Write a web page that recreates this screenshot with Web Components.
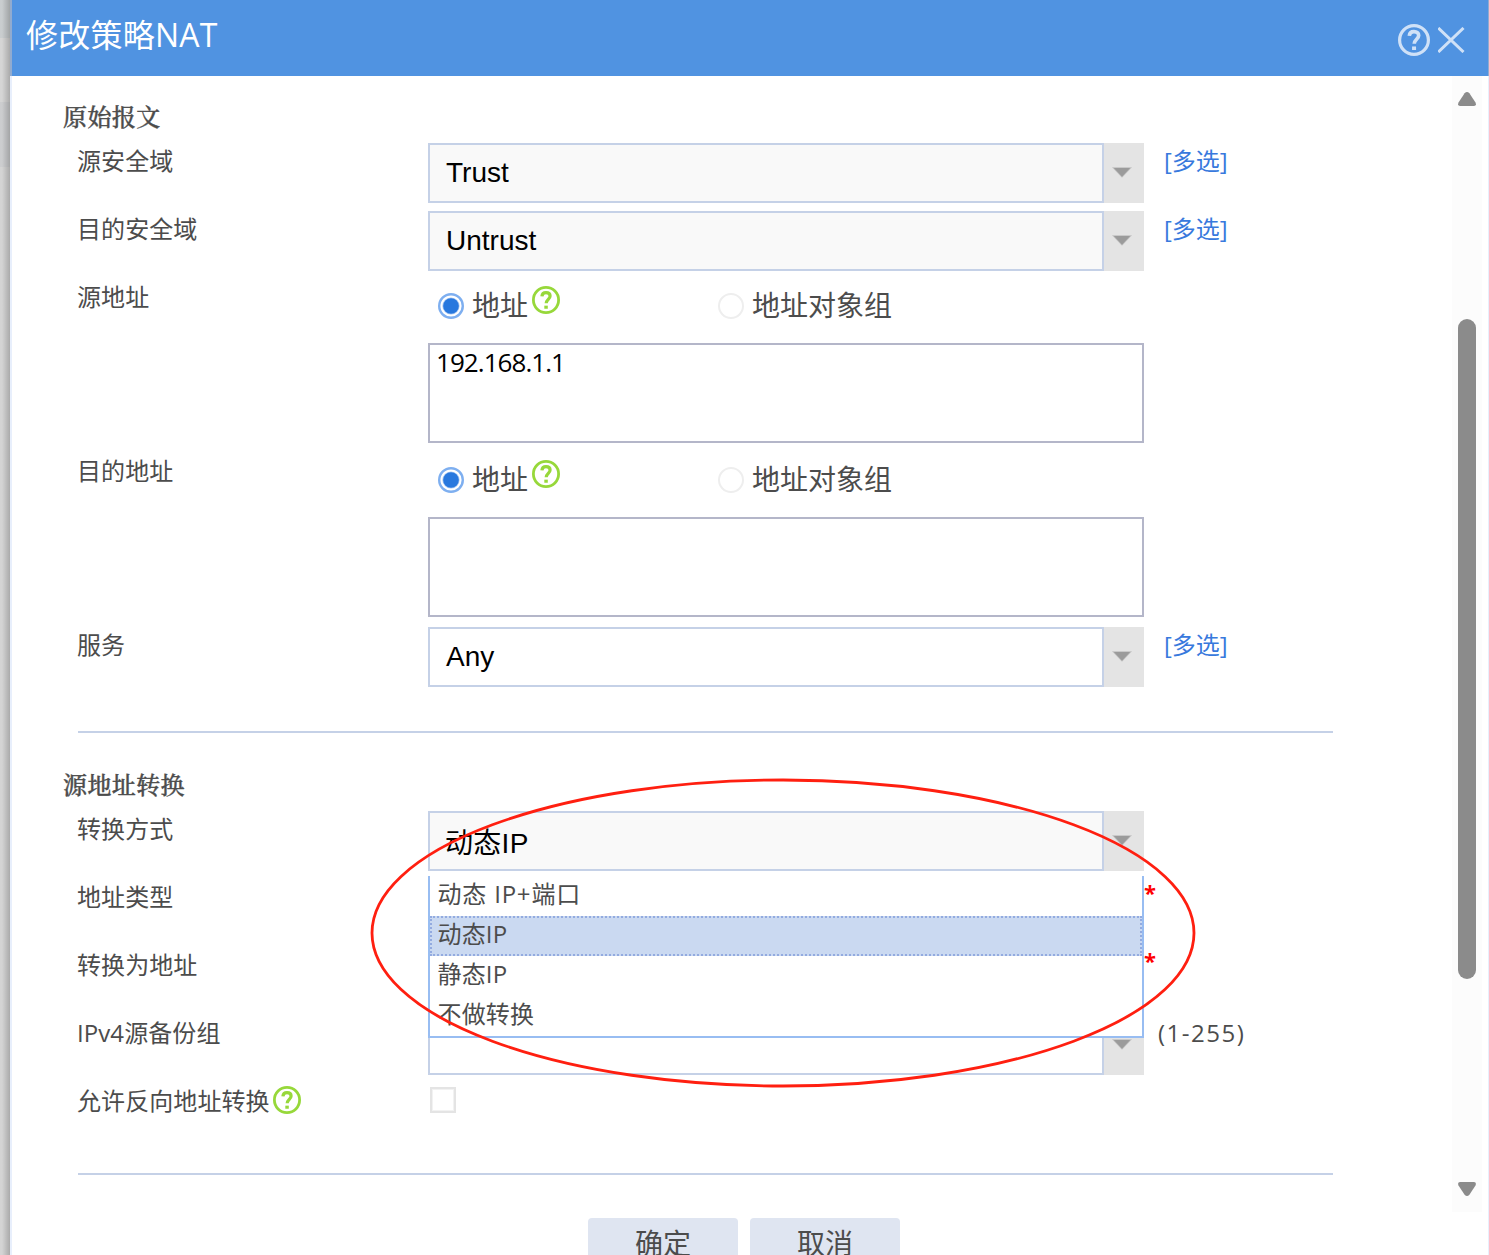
<!DOCTYPE html>
<html lang="zh-CN">
<head>
<meta charset="utf-8">
<title>修改策略NAT</title>
<style>
html,body{margin:0;height:1255px;overflow:hidden;background:#fff}
body{font-family:"Open Sans","Noto Sans CJK SC",sans-serif;color:#4c4c4c;font-size:24px}
</style>
</head>
<body>
<nat-dialog></nat-dialog>
<script>
const define=(name,html,setup)=>customElements.define(name,class extends HTMLElement{
  constructor(){
    super();
    const t=document.createElement('template');
    t.innerHTML=html;
    this.attachShadow({mode:'open'}).appendChild(t.content.cloneNode(true));
  }
  connectedCallback(){ if(setup) setup(this,this.shadowRoot); }
});

define('help-icon',`<style>:host{display:block;width:28px;height:28px;flex:none;color:#97d83a}svg{display:block;width:100%;height:100%}</style>
<svg viewBox="0 0 28 28" fill="none" stroke="currentColor"><circle cx="14" cy="14" r="12.6" stroke-width="2.8"/><path d="M9.9 10.4C10.1 7.9 11.6 6.7 14 6.7c2.5 0 4.1 1.4 4.1 3.4 0 3.1-3.9 3.5-3.9 7.2" stroke-width="3.2"/><path d="M12.3 21.2h3.5" stroke-width="3.1"/></svg>`);

define('title-bar',`<style>
:host{display:flex;height:76px;box-sizing:border-box;background:#5093e1;color:#fff;justify-content:space-between;padding:0 23px 0 14px}
h1{margin:0;font-size:32px;line-height:69px;font-weight:400;white-space:nowrap;letter-spacing:.25px}
.tools{display:flex;gap:8px;padding-top:24px;color:#cfe1f7}
help-icon{width:32px;height:32px;color:inherit}
svg{display:block;margin-top:3px}
</style><h1><slot></slot></h1><div class="tools"><help-icon></help-icon>
<svg width="27" height="26" viewBox="0 0 27 26" fill="none" stroke="currentColor" stroke-width="3"><path d="M.3 1L25.5 25M25.5 1L.3 25"/></svg></div>`);

define('section-title',`<style>:host{display:block;font:500 24px/28px "Noto Serif CJK SC","Noto Serif SC","Noto Sans CJK SC",serif;letter-spacing:.4px;height:32px;margin-left:51px;white-space:nowrap;-webkit-text-stroke:.4px #4c4c4c}</style><slot></slot>`);

define('form-row',`<style>
:host{display:grid;grid-template-columns:351px 716px 1fr;height:68px;margin-left:65px}
:host([tall]){height:174px}
.label{display:flex;height:38px;line-height:36px;white-space:nowrap;gap:3.4px;letter-spacing:.08px}
.aside{line-height:36px;height:38px;white-space:nowrap}
.label help-icon{margin-top:3px}
</style><div class="label"><slot name="label"></slot></div><div><slot></slot></div><div class="aside"><slot name="aside"></slot></div>`,
(h,r)=>{ if(h.hasAttribute('help')) r.querySelector('.label').appendChild(document.createElement('help-icon')); });

define('select-box',`<style>
:host{display:flex;position:relative;height:60px;width:716px}
.value{flex:1;box-sizing:border-box;border:2px solid #c5d1e7;background:#fff;color:#000;font:28px/56px "Liberation Sans","Noto Sans CJK SC",sans-serif;padding-left:16px;white-space:nowrap}
:host([shaded]) .value{background:#f9f9f9}
:host([cjk]) .value{line-height:61px;padding-left:15px;height:60px;letter-spacing:.3px}
.arrow{width:40px;background:#e4e4e4;display:flex;justify-content:center;padding-top:24px;box-sizing:border-box}
svg{display:block;margin-right:4px}
</style><div class="value"><slot></slot></div><div class="arrow"><svg width="20" height="11" viewBox="0 0 20 11"><path d="M0 .3h20L10 10.8z" fill="#c0c0c0"/><path d="M1.8 1h16.4L10 9.8z" fill="#9b9b9b"/></svg></div><slot name="menu"></slot>`);

define('option-list',`<style>
:host{position:absolute;left:0;top:65px;z-index:2;width:716px;height:162px;box-sizing:border-box;border:2px solid #98bdf2;border-top:0;background:#fff;letter-spacing:0}
</style><slot></slot>`);

define('option-item',`<style>
:host{display:block;height:40px;box-sizing:border-box;border:2px solid transparent;padding-left:5.5px;line-height:32px;font-size:24px;color:#4c4c4c;white-space:nowrap;letter-spacing:.15px}
:host([spaced]){letter-spacing:.8px}
:host([selected]){background:#cad9f1;border:2px dotted #93abe0}
</style><slot></slot>`);

define('radio-choice',`<style>
:host{display:flex;align-items:flex-start;width:280px;height:54px;font-size:28px;line-height:52px;white-space:nowrap}
svg{flex:none;margin:14px 8px 0 0}
help-icon{margin:7px 0 0 4px}
.on{display:none}:host([checked]) .on{display:block}:host([checked]) .off{display:none}
</style><svg class="on" width="26" height="26" viewBox="0 0 26 26"><circle cx="13" cy="13" r="11.8" fill="#fff" stroke="#7eaff0" stroke-width="2.4"/><circle cx="13" cy="13" r="8.6" fill="#a9c8f2"/><circle cx="13" cy="13" r="7.8" fill="#2878de"/></svg>
<svg class="off" width="26" height="26" viewBox="0 0 26 26"><circle cx="13" cy="13" r="12" fill="#fff" stroke="#eee" stroke-width="2"/></svg><slot></slot>`,
(h,r)=>{ if(h.hasAttribute('help')) r.appendChild(document.createElement('help-icon')); });

define('address-field',`<style>
:host{display:block}
.choices{display:flex;height:64px;padding-left:10px;box-sizing:border-box}
.box{height:100px;box-sizing:border-box;border:2px solid #b4b6c9;background:#fff;color:#000;font-size:26px;line-height:35px;padding-left:6px;letter-spacing:-.95px}
</style><div class="choices"><radio-choice checked help>地址</radio-choice><radio-choice>地址对象组</radio-choice></div><div class="box"><slot></slot></div>`);

define('multi-link',`<style>:host{display:block;color:#3879dd;padding-left:20px}</style><slot></slot>`);
define('required-mark',`<style>:host{display:block;color:#f00;font-weight:700;font-size:22px;line-height:27px}</style>*`);
define('range-hint',`<style>:host{display:block;padding-left:14px;letter-spacing:1.5px}</style><slot></slot>`);
define('check-box',`<style>:host{display:block;width:26px;height:26px;box-sizing:border-box;border:2px solid #e4e4e4;box-shadow:inset 0 0 0 1px #f2f2f2;margin:4px 0 0 2px}</style>`);
define('rule-line',`<style>:host{display:block;height:2px;width:1255px;margin-left:66px;background:#c5d1e7}</style>`);

define('scroll-rail',`<style>
:host{display:flex;flex-direction:column;align-items:center;width:30px;height:1136px;background:#fcfcfc;margin-right:6px;flex:none;box-sizing:border-box;padding:16px 0 14px}
svg{display:block;flex:none}.thumb{width:18px;height:660px;border-radius:9px;background:#8b8b8b;margin-top:213px;margin-bottom:203px;flex:none}
</style><svg width="18" height="14" viewBox="0 0 18 14"><path d="M6.6 1.2Q9-1.2 11.4 1.2L17.5 10.5Q18.8 14 16 14H2Q-.8 14 .5 10.5z" fill="#8b8b8b"/></svg><div class="thumb"></div><svg width="18" height="14" viewBox="0 0 18 14"><path d="M6.6 12.8Q9 15.2 11.4 12.8L17.5 3.5Q18.8 0 16 0H2Q-.8 0 .5 3.5z" fill="#8b8b8b"/></svg>`);

define('push-button',`<style>:host{display:block;width:150px;height:52px;border-radius:4px;background:#dfe5f1;text-align:center;font-size:28px;line-height:50px}</style><slot></slot>`);

define('red-ellipse',`<style>:host{position:absolute;left:370px;top:777px;z-index:5;pointer-events:none}svg{display:block}</style>
<svg width="827" height="312"><ellipse cx="413" cy="156" rx="411" ry="153" fill="none" stroke="#ff1f10" stroke-width="2.8"/></svg>`);

define('nat-dialog',`<style>
:host{display:flex;height:1255px;position:relative;overflow:hidden}
.page{width:10px;flex:none;background:linear-gradient(90deg,transparent 20%,rgba(0,0,0,.2)),linear-gradient(#c9cdcf 0 38px,#d5d5d5 38px 102px,#cccdcf 102px 167px,#d4d4d4 167px)}
.edge{width:2px;flex:none;background:linear-gradient(#91abcf 0 76px,#e8effc 76px)}
.edge.r{width:1px}
.dialog{flex:1;min-width:0;display:flex;flex-direction:column;background:#fff}
.body{display:flex;height:1179px;overflow:hidden}
.form{flex:1;min-width:0;padding-top:26px}
.form section-title{margin-bottom:9px}
.first{margin-top:36px}
.second{margin-top:37px}
.last{margin-top:22px}
.buttons{display:flex;gap:12px;margin:43px 0 0 576px}
</style>
<div class="page"></div><div class="edge"></div>
<div class="dialog"><title-bar>修改策略NAT</title-bar>
<div class="body"><div class="form">
<section-title>原始报文</section-title>
<form-row><span slot="label">源安全域</span><select-box shaded>Trust</select-box><multi-link slot="aside">[多选]</multi-link></form-row>
<form-row><span slot="label">目的安全域</span><select-box shaded>Untrust</select-box><multi-link slot="aside">[多选]</multi-link></form-row>
<form-row tall><span slot="label">源地址</span><address-field>192.168.1.1</address-field></form-row>
<form-row tall><span slot="label">目的地址</span><address-field></address-field></form-row>
<form-row><span slot="label">服务</span><select-box>Any</select-box><multi-link slot="aside">[多选]</multi-link></form-row>
<rule-line class="first"></rule-line>
<section-title class="second">源地址转换</section-title>
<form-row><span slot="label">转换方式</span><select-box shaded cjk>动态IP<option-list slot="menu"><option-item spaced>动态 IP+端口</option-item><option-item selected>动态IP</option-item><option-item>静态IP</option-item><option-item>不做转换</option-item></option-list></select-box></form-row>
<form-row><span slot="label">地址类型</span><required-mark slot="aside"></required-mark></form-row>
<form-row><span slot="label">转换为地址</span><required-mark slot="aside"></required-mark></form-row>
<form-row><span slot="label">IPv4源备份组</span><select-box></select-box><range-hint slot="aside">(1-255)</range-hint></form-row>
<form-row help><span slot="label">允许反向地址转换</span><check-box></check-box></form-row>
<rule-line class="last"></rule-line>
<div class="buttons"><push-button>确定</push-button><push-button>取消</push-button></div>
</div><scroll-rail></scroll-rail></div></div><div class="edge r"></div><red-ellipse></red-ellipse>`);
</script>
</body>
</html>
